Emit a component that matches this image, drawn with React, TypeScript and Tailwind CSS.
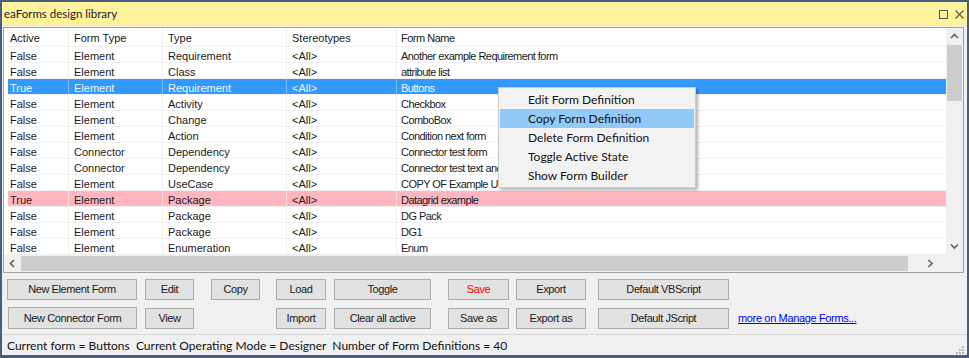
import React from 'react';

type Row = { active: string; formType: string; type: string; stereo: string; name: string; state?: 'selected' | 'pink' };

const rows: Row[] = [
  { active: 'False', formType: 'Element', type: 'Requirement', stereo: '<All>', name: 'Another example Requirement form' },
  { active: 'False', formType: 'Element', type: 'Class', stereo: '<All>', name: 'attribute list' },
  { active: 'True', formType: 'Element', type: 'Requirement', stereo: '<All>', name: 'Buttons', state: 'selected' },
  { active: 'False', formType: 'Element', type: 'Activity', stereo: '<All>', name: 'Checkbox' },
  { active: 'False', formType: 'Element', type: 'Change', stereo: '<All>', name: 'ComboBox' },
  { active: 'False', formType: 'Element', type: 'Action', stereo: '<All>', name: 'Condition next form' },
  { active: 'False', formType: 'Connector', type: 'Dependency', stereo: '<All>', name: 'Connector test form' },
  { active: 'False', formType: 'Connector', type: 'Dependency', stereo: '<All>', name: 'Connector test text and more' },
  { active: 'False', formType: 'Element', type: 'UseCase', stereo: '<All>', name: 'COPY OF Example UseCase form' },
  { active: 'True', formType: 'Element', type: 'Package', stereo: '<All>', name: 'Datagrid example', state: 'pink' },
  { active: 'False', formType: 'Element', type: 'Package', stereo: '<All>', name: 'DG Pack' },
  { active: 'False', formType: 'Element', type: 'Package', stereo: '<All>', name: 'DG1' },
  { active: 'False', formType: 'Element', type: 'Enumeration', stereo: '<All>', name: 'Enum' },
];

const menuItems = ['Edit Form Definition', 'Copy Form Definition', 'Delete Form Definition', 'Toggle Active State', 'Show Form Builder'];

const uiFont = { fontFamily: 'Lato, "Noto Sans", sans-serif' };

function Btn({ label, w, className = '' }: { label: string; w: string; className?: string }) {
  return (
    <div
      className={`${w} h-[21px] shrink-0 flex items-center justify-center bg-[#e1e1e1] border border-[#adadad] text-[11px] tracking-[-0.4px] ${className}`}
    >
      {label}
    </div>
  );
}

function Chevron({ dir }: { dir: 'up' | 'down' | 'left' | 'right' }) {
  const d = {
    up: 'M1 5 L4.5 1.5 L8 5',
    down: 'M1 1.5 L4.5 5 L8 1.5',
    left: 'M5 1 L1.5 4.5 L5 8',
    right: 'M1.5 1 L5 4.5 L1.5 8',
  }[dir];
  const vert = dir === 'up' || dir === 'down';
  return (
    <svg width={vert ? 9 : 7} height={vert ? 7 : 9} viewBox={vert ? '0 0 9 7' : '0 0 7 9'}>
      <path d={d} fill="none" stroke="#606060" strokeWidth="1.6" />
    </svg>
  );
}

export default function App() {
  return (
    <div
      className="w-[969px] h-[358px] bg-[#4a5d80] pt-[2px] px-[2px] pb-[3px] flex flex-col text-[#1a1a1a]"
      style={{ fontFamily: '"Liberation Sans", Arial, sans-serif' }}
    >
      {/* Title bar */}
      <div className="h-[24px] shrink-0 bg-[#fff29d] flex items-center pl-[2px] pr-[3px]">
        <span className="text-[11.5px] text-[#222]" style={uiFont}>
          eaForms design library
        </span>
        <div className="ml-auto flex items-center gap-[7px]">
          <div className="w-[9px] h-[9px] border border-[#555]" />
          <svg width="9" height="9" viewBox="0 0 9 9">
            <path d="M0.5 0.5 L8.5 8.5 M8.5 0.5 L0.5 8.5" stroke="#555" strokeWidth="1.1" />
          </svg>
        </div>
      </div>

      <div className="flex-1 bg-[#f0f0f0] flex flex-col relative">
        {/* Grid */}
        <div className="mt-[1px] ml-[1px] w-[961px] h-[246px] border border-[#a0a0a0] bg-white flex flex-col">
          <div className="flex flex-1 min-h-0">
            <div className="flex-1 pl-[4px] text-[11px] leading-[12px]">
              <div className="h-[19px] flex border-b border-[#f0f0f0]">
                <div className="w-[60px] pl-[2px] pt-[4px]">Active</div>
                <div className="w-[94px] pl-[5px] pt-[4px] border-l border-[#f0f0f0]">Form Type</div>
                <div className="w-[124px] pl-[5px] pt-[4px] border-l border-[#f0f0f0]">Type</div>
                <div className="w-[110px] pl-[5px] pt-[4px] border-l border-[#f0f0f0]">Stereotypes</div>
                <div className="flex-1 pl-[4px] pt-[4px] border-l border-[#f0f0f0] tracking-[-0.5px]">Form Name</div>
              </div>
              {rows.map((r, i) => {
                const bg =
                  r.state === 'selected' ? 'bg-[#3399ff] text-[#eef5ff]' : r.state === 'pink' ? 'bg-[#ffb6c1]' : 'bg-white';
                const sep = r.state === 'selected' ? 'border-[#7cb9ff]' : r.state === 'pink' ? 'border-[#ffd6dc]' : 'border-[#f0f0f0]';
                return (
                  <div key={i} className={`h-[16px] flex border-b border-[#f0f0f0] ${bg}`}>
                    <div className="w-[60px] pl-[2px] pt-[3px]">{r.active}</div>
                    <div className={`w-[94px] pl-[5px] pt-[3px] border-l ${sep}`}>{r.formType}</div>
                    <div className={`w-[124px] pl-[5px] pt-[3px] border-l ${sep}`}>{r.type}</div>
                    <div className={`w-[110px] pl-[5px] pt-[3px] border-l ${sep}`}>{r.stereo}</div>
                    <div className={`flex-1 pl-[4px] pt-[3px] border-l ${sep} whitespace-nowrap overflow-hidden tracking-[-0.55px]`}>
                      {r.name}
                    </div>
                  </div>
                );
              })}
            </div>
            {/* Vertical scrollbar */}
            <div className="w-[17px] bg-[#f0f0f0] flex flex-col">
              <div className="h-[17px] flex items-center justify-center">
                <Chevron dir="up" />
              </div>
              <div className="mx-[1px] h-[56px] bg-[#cdcdcd]" />
              <div className="flex-1" />
              <div className="h-[17px] flex items-center justify-center">
                <Chevron dir="down" />
              </div>
            </div>
          </div>
          {/* Horizontal scrollbar */}
          <div className="h-[17px] shrink-0 flex bg-[#f0f0f0]">
            <div className="w-[17px] flex items-center justify-center">
              <Chevron dir="left" />
            </div>
            <div className="w-[887px] my-[1px] bg-[#cdcdcd]" />
            <div className="flex-1 flex items-center justify-center pl-[6px]">
              <Chevron dir="right" />
            </div>
            <div className="w-[17px] bg-[#f0f0f0]" />
          </div>
        </div>

        {/* Buttons */}
        <div className="flex mt-[6px] pl-[5px]">
          <Btn label="New Element Form" w="w-[130px]" />
          <Btn label="Edit" w="w-[49px]" className="ml-[8px]" />
          <Btn label="Copy" w="w-[49px]" className="ml-[17px]" />
          <Btn label="Load" w="w-[50px]" className="ml-[16px]" />
          <Btn label="Toggle" w="w-[97px]" className="ml-[8px]" />
          <Btn label="Save" w="w-[61px]" className="ml-[17px] text-[#ff0000]" />
          <Btn label="Export" w="w-[70px]" className="ml-[7px]" />
          <Btn label="Default VBScript" w="w-[131px]" className="ml-[12px]" />
        </div>
        <div className="flex items-center mt-[7px] pl-[6px]">
          <Btn label="New Connector Form" w="w-[129px] h-[22px]" />
          <Btn label="View" w="w-[49px]" className="ml-[8px]" />
          <Btn label="Import" w="w-[50px]" className="ml-[82px]" />
          <Btn label="Clear all active" w="w-[97px]" className="ml-[8px]" />
          <Btn label="Save as" w="w-[61px]" className="ml-[17px]" />
          <Btn label="Export as" w="w-[70px]" className="ml-[7px]" />
          <Btn label="Default JScript" w="w-[131px]" className="ml-[12px]" />
          <span className="ml-[9px] mt-[1px] text-[11px] tracking-[-0.35px] text-[#0000ff] underline">
            more on Manage Forms...
          </span>
        </div>

        {/* Status bar */}
        <div className="mt-auto h-[21px] border-t border-[#d7d7d7] flex items-center pl-[5px] pt-[2px]">
          <span className="text-[12px] whitespace-pre text-[#111]" style={uiFont}>
            {'Current form = Buttons  Current Operating Mode = Designer  Number of Form Definitions = 40'}
          </span>
          <svg className="ml-auto mr-[3px] mt-[6px]" width="9" height="9" viewBox="0 0 9 9">
            {[[7, 1], [4, 4], [7, 4], [1, 7], [4, 7], [7, 7]].map(([x, y], i) => (
              <rect key={i} x={x} y={y} width="2" height="2" fill="#b8b8b8" />
            ))}
          </svg>
        </div>

        {/* Context menu */}
        <div
          className="absolute left-[496px] top-[61px] w-[198px] h-[101px] bg-[#f2f2f2] border border-[#cccccc] shadow-[2px_2px_3px_rgba(0,0,0,0.3)] py-[2px] px-[1px] flex flex-col"
          style={uiFont}
        >
          {menuItems.map((m, i) => (
            <div
              key={m}
              className={`h-[19.4px] flex items-center pl-[28px] text-[12px] text-[#111] ${i === 1 ? 'bg-[#91c9f7]' : ''}`}
            >
              {m}
            </div>
          ))}
        </div>
      </div>
    </div>
  );
}
